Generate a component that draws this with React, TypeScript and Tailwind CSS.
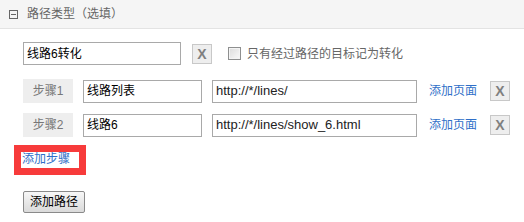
import React from 'react'

const font = { fontFamily: '"Liberation Sans", "Noto Sans CJK SC", sans-serif' }

function XButton() {
  return (
    <button
      type="button"
      className="w-[20px] h-[20px] flex items-center justify-center bg-[#eeeeee] border border-[#c8c8c8] text-[#808080] text-[14px] font-bold leading-none"
    >
      X
    </button>
  )
}

function StepRow({ step, name, url }: { step: string; name: string; url: string }) {
  return (
    <div className="flex items-center h-[24px]">
      <span className="w-[50px] h-[24px] flex items-center justify-center bg-[#eeeeee] text-[#777] text-[12px]">{step}</span>
      <div className="ml-[10px] w-[119px] h-[23px] border border-[#a9a9a9] flex items-center px-[3px] text-[12px] text-black">{name}</div>
      <div className="ml-[10px] w-[205px] h-[23px] border border-[#a9a9a9] flex items-center px-[3px] text-[13px] text-[#222]">{url}</div>
      <a className="ml-[12px] text-[12px] text-[#2f6fc8] leading-none">添加页面</a>
      <div className="ml-[13px]">
        <XButton />
      </div>
    </div>
  )
}

export default function App() {
  return (
    <div className="w-[524px] h-[222px] bg-white overflow-hidden" style={font}>
      <div className="h-[29px] bg-[#f5f5f5] border-b border-[#e3e3e3] flex items-center pl-[9px]">
        <span className="w-[9px] h-[9px] border border-[#666] flex items-center justify-center">
          <span className="w-[5px] h-px bg-[#666]" />
        </span>
        <span className="ml-[9px] text-[12px] text-[#666]">路径类型（选填）</span>
      </div>

      <div className="pl-[23px] flex flex-col">
        <div className="mt-[13px] flex items-center h-[23px]">
          <div className="w-[158px] h-[23px] border border-[#a9a9a9] flex items-center px-[3px] text-[12px] text-black">线路6转化</div>
          <div className="ml-[11px]">
            <XButton />
          </div>
          <span className="ml-[16px] w-[13px] h-[13px] border border-[#8e8f8f] bg-gradient-to-br from-[#dcdcdc] to-[#fafafa] shadow-[inset_0_0_0_1px_#f4f4f4]" />
          <span className="ml-[6px] text-[12px] text-[#666]">只有经过路径的目标记为转化</span>
        </div>

        <div className="mt-[14px]">
          <StepRow step="步骤1" name="线路列表" url="http://*/lines/" />
        </div>
        <div className="mt-[10px]">
          <StepRow step="步骤2" name="线路6" url="http://*/lines/show_6.html" />
        </div>

        <div className="mt-[8px] -ml-[9px] w-[72px] h-[30px] border-[7px] border-[#f73b3b] bg-white">
          <a className="block pl-[1px] text-[12px] leading-[14px] text-[#2f6fc8]">添加步骤</a>
        </div>

        <div className="mt-[14px]">
          <button
            type="button"
            className="w-[62px] h-[22px] border border-[#8a8a8a] rounded-[2px] bg-gradient-to-b from-[#f7f7f7] to-[#dadada] text-[12px] text-black leading-none"
          >
            添加路径
          </button>
        </div>
      </div>
    </div>
  )
}
